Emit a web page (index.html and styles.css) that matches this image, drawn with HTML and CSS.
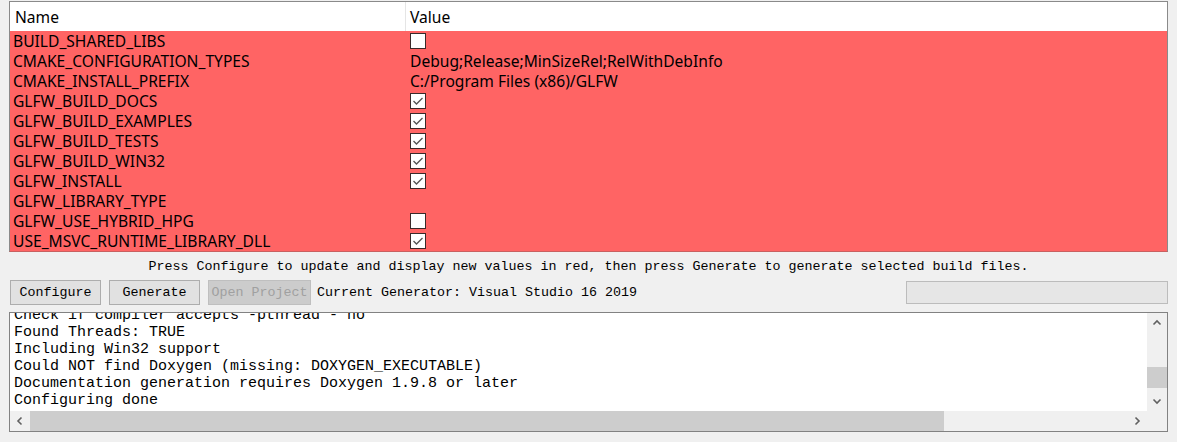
FILE: index.html
```html
<!DOCTYPE html>
<html>
<head>
<meta charset="utf-8">
<link rel="stylesheet" href="styles.css">
</head>
<body>
<div class="app">
  <div class="table">
    <div class="thead">
      <div class="th th-name">Name</div>
      <div class="th th-value">Value</div>
    </div>
    <div class="rows">
      <div class="row"><div class="cell name">BUILD_SHARED_LIBS</div><div class="cell value"><span class="cb"></span></div></div>
      <div class="row"><div class="cell name">CMAKE_CONFIGURATION_TYPES</div><div class="cell value">Debug;Release;MinSizeRel;RelWithDebInfo</div></div>
      <div class="row"><div class="cell name">CMAKE_INSTALL_PREFIX</div><div class="cell value">C:/Program Files (x86)/GLFW</div></div>
      <div class="row"><div class="cell name">GLFW_BUILD_DOCS</div><div class="cell value"><span class="cb checked"><svg viewBox="0 0 14 14"><path d="M2.5 7 L5.5 10 L11.5 4"/></svg></span></div></div>
      <div class="row"><div class="cell name">GLFW_BUILD_EXAMPLES</div><div class="cell value"><span class="cb checked"><svg viewBox="0 0 14 14"><path d="M2.5 7 L5.5 10 L11.5 4"/></svg></span></div></div>
      <div class="row"><div class="cell name">GLFW_BUILD_TESTS</div><div class="cell value"><span class="cb checked"><svg viewBox="0 0 14 14"><path d="M2.5 7 L5.5 10 L11.5 4"/></svg></span></div></div>
      <div class="row"><div class="cell name">GLFW_BUILD_WIN32</div><div class="cell value"><span class="cb checked"><svg viewBox="0 0 14 14"><path d="M2.5 7 L5.5 10 L11.5 4"/></svg></span></div></div>
      <div class="row"><div class="cell name">GLFW_INSTALL</div><div class="cell value"><span class="cb checked"><svg viewBox="0 0 14 14"><path d="M2.5 7 L5.5 10 L11.5 4"/></svg></span></div></div>
      <div class="row"><div class="cell name">GLFW_LIBRARY_TYPE</div><div class="cell value"></div></div>
      <div class="row"><div class="cell name">GLFW_USE_HYBRID_HPG</div><div class="cell value"><span class="cb"></span></div></div>
      <div class="row"><div class="cell name">USE_MSVC_RUNTIME_LIBRARY_DLL</div><div class="cell value"><span class="cb checked"><svg viewBox="0 0 14 14"><path d="M2.5 7 L5.5 10 L11.5 4"/></svg></span></div></div>
    </div>
  </div>

  <div class="status">Press Configure to update and display new values in red, then press Generate to generate selected build files.</div>

  <div class="toolbar">
    <button class="btn">Configure</button>
    <button class="btn">Generate</button>
    <button class="btn disabled">Open Project</button>
    <span class="generator">Current Generator: Visual Studio 16 2019</span>
    <span class="spacer"></span>
    <div class="progress"></div>
  </div>

  <div class="log">
    <div class="log-text">
      <div class="log-lines">
        <div class="ln">Check if compiler accepts -pthread - no</div>
        <div class="ln">Found Threads: TRUE</div>
        <div class="ln">Including Win32 support</div>
        <div class="ln">Could NOT find Doxygen (missing: DOXYGEN_EXECUTABLE)</div>
        <div class="ln">Documentation generation requires Doxygen 1.9.8 or later</div>
        <div class="ln">Configuring done</div>
      </div>
    </div>
    <div class="vscroll">
      <span class="arrow"><svg viewBox="0 0 10 10"><path d="M1.5 6.5 L5 3 L8.5 6.5"/></svg></span>
      <span class="vtrack"><span class="vthumb"></span></span>
      <span class="arrow"><svg viewBox="0 0 10 10"><path d="M1.5 3.5 L5 7 L8.5 3.5"/></svg></span>
    </div>
    <div class="hscroll">
      <span class="arrow"><svg viewBox="0 0 10 10"><path d="M6.5 1.5 L3 5 L6.5 8.5"/></svg></span>
      <span class="htrack"><span class="hthumb"></span></span>
      <span class="arrow"><svg viewBox="0 0 10 10"><path d="M3.5 1.5 L7 5 L3.5 8.5"/></svg></span>
    </div>
    <div class="corner"></div>
  </div>
</div>
</body>
</html>
```

FILE: styles.css
```css
html, body {
  margin: 0;
  padding: 0;
  background: #f0f0f0;
}
.app {
  padding: 1px 9px 0 9px;
  display: flex;
  flex-direction: column;
}
.table {
  border: 1px solid #8a8a8a;
  border-bottom-color: #c96060;
  background: #ffffff;
  font-family: "Noto Sans", "Open Sans", sans-serif;
  font-size: 15.6px;
  color: #000;
}
.thead {
  display: grid;
  grid-template-columns: 396px 1fr;
  height: 29px;
  background: #fff;
}
.th {
  display: flex;
  align-items: center;
  padding-left: 5px;
}
.th-name {
  border-right: 1px solid #e5e5e5;
}
.th-value {
  padding-left: 4px;
}
.rows {
  background: #ff6464;
}
.row {
  display: grid;
  grid-template-columns: 397px 1fr;
  height: 20px;
}
.cell {
  display: flex;
  align-items: center;
  white-space: nowrap;
  line-height: 20px;
}
.name {
  padding-left: 3px;
}
.value {
  padding-left: 3px;
}
.cb {
  box-sizing: border-box;
  width: 16px;
  height: 16px;
  border: 1px solid #3a2a2a;
  background: #fff;
  display: inline-flex;
  align-items: center;
  justify-content: center;
}
.cb svg {
  width: 14px;
  height: 14px;
}
.cb svg path {
  fill: none;
  stroke: #555;
  stroke-width: 1.3;
}
.status {
  height: 28px;
  display: flex;
  align-items: center;
  justify-content: center;
  font-family: "Liberation Mono", monospace;
  font-size: 13.33px;
  color: #000;
  white-space: nowrap;
}
.toolbar {
  display: flex;
  align-items: center;
  height: 25px;
  font-family: "Liberation Mono", monospace;
  font-size: 13.33px;
}
.btn {
  box-sizing: border-box;
  height: 25px;
  width: 91px;
  margin: 0 8px 0 1px;
  padding: 0;
  border: 1px solid #adadad;
  background: #e1e1e1;
  font-family: "Liberation Mono", monospace;
  font-size: 13.33px;
  color: #000;
}
.btn + .btn {
  margin-left: 0;
}
.btn.disabled {
  width: 103px;
  margin-right: 6px;
  background: #cccccc;
  border-color: #bfbfbf;
  color: #a0a0a0;
}
.generator {
  white-space: nowrap;
  color: #000;
}
.spacer {
  flex: 1;
}
.progress {
  box-sizing: border-box;
  width: 262px;
  height: 23px;
  border: 1px solid #bcbcbc;
  background: #e6e6e6;
}
.log {
  margin-top: 7px;
  box-sizing: border-box;
  height: 120px;
  border: 1px solid #828282;
  background: #fff;
  display: grid;
  grid-template-columns: minmax(0, 1fr) 20px;
  grid-template-rows: minmax(0, 1fr) 20px;
  overflow: hidden;
}
.log-text {
  overflow: hidden;
  font-family: "Liberation Mono", monospace;
  font-size: 15px;
  line-height: 17px;
  color: #000;
}
.log-lines {
  margin-top: -6px;
  padding-left: 4px;
}
.ln {
  white-space: pre;
  height: 17px;
}
.vscroll {
  background: #f0f0f0;
  display: flex;
  flex-direction: column;
}
.vscroll .arrow {
  height: 20px;
  display: flex;
  align-items: center;
  justify-content: center;
}
.vtrack {
  flex: 1;
  display: flex;
  flex-direction: column;
  padding-top: 34px;
}
.vthumb {
  height: 21px;
  background: #cdcdcd;
}
.hscroll {
  background: #f0f0f0;
  display: flex;
  align-items: stretch;
}
.hscroll .arrow {
  width: 20px;
  display: flex;
  align-items: center;
  justify-content: center;
}
.htrack {
  flex: 1;
  display: flex;
}
.hthumb {
  width: 914px;
  background: #cdcdcd;
}
.arrow svg {
  width: 10px;
  height: 10px;
}
.arrow svg path {
  fill: none;
  stroke: #606060;
  stroke-width: 1.6;
}
.corner {
  background: #f0f0f0;
}
```
